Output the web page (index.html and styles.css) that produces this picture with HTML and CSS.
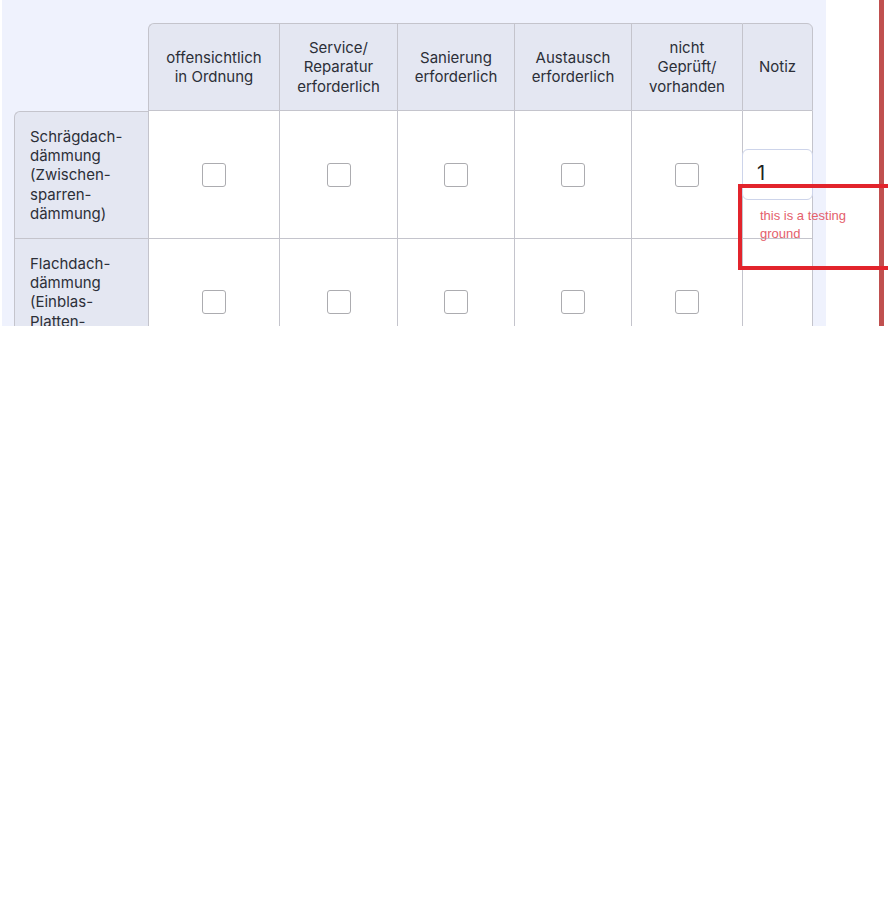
FILE: index.html
```html
<!DOCTYPE html>
<html lang="de">
<head>
<meta charset="utf-8">
<title>Checkliste</title>
<link rel="stylesheet" href="styles.css">
</head>
<body>
<div class="page">
  <div class="panel">
    <table class="grid">
      <colgroup>
        <col class="c-label">
        <col class="c1"><col class="c2"><col class="c3"><col class="c4"><col class="c5"><col class="c6">
      </colgroup>
      <thead>
        <tr>
          <th class="blank"></th>
          <th class="h first">offensichtlich in Ordnung</th>
          <th class="h">Service/ Reparatur erforderlich</th>
          <th class="h">Sanierung erforderlich</th>
          <th class="h">Austausch erforderlich</th>
          <th class="h">nicht Geprüft/ vorhanden</th>
          <th class="h last">Notiz</th>
        </tr>
      </thead>
      <tbody>
        <tr>
          <th class="rowlabel top">Schrägdach-dämmung (Zwischen-sparren-dämmung)</th>
          <td><span class="box"></span></td>
          <td><span class="box"></span></td>
          <td><span class="box"></span></td>
          <td><span class="box"></span></td>
          <td><span class="box"></span></td>
          <td class="note"><span class="input">1</span></td>
        </tr>
        <tr>
          <th class="rowlabel">Flachdach-dämmung (Einblas-Platten-dämmung)</th>
          <td><span class="box"></span></td>
          <td><span class="box"></span></td>
          <td><span class="box"></span></td>
          <td><span class="box"></span></td>
          <td><span class="box"></span></td>
          <td class="note"></td>
        </tr>
      </tbody>
    </table>
  </div>
  <div class="gutter"></div>
  <div class="redline"></div>
  <div class="annot"><span class="annot-text">this is a testing ground</span></div>
</div>
</body>
</html>
```

FILE: styles.css
```css
html, body {
  margin: 0;
  padding: 0;
  background: #ffffff;
}

.page {
  position: relative;
  display: flex;
  height: 326px;
  overflow: hidden;
}

.panel {
  margin-left: 2px;
  width: 812px;
  padding: 23px 0 0 12px;
  background: #eff2fd;
  overflow: hidden;
}

.gutter {
  width: 53px;
}

.redline {
  width: 5px;
  background: #c0504f;
}

.grid {
  border-collapse: separate;
  border-spacing: 0;
  table-layout: fixed;
  width: 799px;
  font-family: Inter, "Noto Sans", sans-serif;
  font-size: 15px;
  line-height: 19.3px;
  color: #2c2f38;
}

.c-label { width: 134px; }
.c1 { width: 131px; }
.c2 { width: 118px; }
.c3 { width: 117px; }
.c4 { width: 117px; }
.c5 { width: 111px; }
.c6 { width: 71px; }

.grid th, .grid td {
  padding: 0;
  font-weight: 400;
}

.grid .blank {
  background: transparent;
}

.grid .h {
  height: 86px;
  background: #e4e7f2;
  border-top: 1px solid #c4c4cc;
  border-left: 1px solid #c4c4cc;
  border-bottom: 1px solid #c4c4cc;
  text-align: center;
  vertical-align: middle;
  padding: 0 14px;
}

.grid .h.first {
  border-top-left-radius: 6px;
}

.grid .h.last {
  border-right: 1px solid #c4c4cc;
  border-top-right-radius: 6px;
}

.grid .rowlabel {
  height: 126px;
  background: #e4e7f2;
  border-left: 1px solid #c4c4cc;
  border-bottom: 1px solid #c4c4cc;
  text-align: left;
  vertical-align: middle;
  padding: 0 10px 0 15px;
}

.grid .rowlabel.top {
  border-top: 1px solid #c4c4cc;
  border-top-left-radius: 6px;
}

.grid td {
  background: #ffffff;
  border-left: 1px solid #c4c4cc;
  border-bottom: 1px solid #c4c4cc;
  text-align: center;
  vertical-align: middle;
}

.grid td.note {
  border-right: 1px solid #c4c4cc;
}

.box {
  display: block;
  margin: 0 auto;
  width: 22px;
  height: 22px;
  border: 1px solid #acacb0;
  border-radius: 3px;
  background: #ffffff;
}

.input {
  display: block;
  box-sizing: border-box;
  height: 51px;
  margin-left: -1px;
  margin-right: -1px;
  padding: 11px 0 0 14px;
  border: 1px solid #cdd4ea;
  border-radius: 6px;
  background: #ffffff;
  text-align: left;
  font-size: 20px;
  line-height: 24px;
  color: #222222;
}

.annot {
  position: absolute;
  left: 738px;
  top: 184px;
  width: 160px;
  height: 78px;
  border: 4px solid #e2242c;
  box-sizing: content-box;
}

.annot-text {
  display: block;
  width: 110px;
  padding: 19px 0 0 18px;
  font-family: "Liberation Sans", Arial, sans-serif;
  font-size: 13px;
  line-height: 18px;
  color: #e4606c;
}
```
